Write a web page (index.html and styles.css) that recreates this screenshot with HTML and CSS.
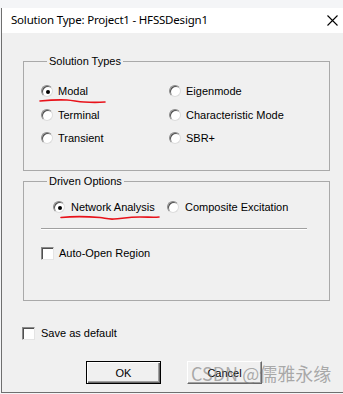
FILE: index.html
```html
<!DOCTYPE html>
<html>
<head>
  <title>Solution Type</title>
  <link rel="stylesheet" href="styles.css">
</head>
<body>
  <div class="window">
    <div class="titlebar">
      <span class="title">Solution Type: Project1 - HFSSDesign1</span>
      <svg class="close" width="11" height="11" viewBox="0 0 11 11">
        <path d="M0.5 0.5 L10.5 10.5 M10.5 0.5 L0.5 10.5" stroke="#000" stroke-width="1.1" fill="none"/>
      </svg>
    </div>

    <div class="dialog">
      <fieldset class="group types">
        <legend>Solution Types</legend>
        <div class="type-grid">
          <label class="opt"><span class="radio checked"></span>Modal</label>
          <label class="opt"><span class="radio"></span>Eigenmode</label>
          <label class="opt"><span class="radio"></span>Terminal</label>
          <label class="opt"><span class="radio"></span>Characteristic Mode</label>
          <label class="opt"><span class="radio"></span>Transient</label>
          <label class="opt"><span class="radio"></span>SBR+</label>
        </div>
      </fieldset>

      <fieldset class="group driven">
        <legend>Driven Options</legend>
        <div class="driven-row">
          <label class="opt wide"><span class="radio checked"></span>Network Analysis</label>
          <label class="opt wide"><span class="radio"></span>Composite Excitation</label>
        </div>
        <div class="separator"></div>
        <label class="opt check-row"><span class="check"></span>Auto-Open Region</label>
      </fieldset>

      <label class="opt save-row"><span class="check"></span>Save as default</label>

      <div class="buttons">
        <button class="btn default">OK</button>
        <button class="btn">Cancel</button>
      </div>

      <div class="watermark">CSDN @儒雅永缘</div>
    </div>
  </div>

  <!-- hand drawn red marks over the screenshot -->
  <svg class="marks" width="343" height="394" viewBox="0 0 343 394">
    <path d="M40 101 C50 100 58 99.5 67 100 C74 100.5 78 102 84 102 C92 102.5 98 102.5 105 102"
          stroke="#e8121a" stroke-width="1.6" fill="none" stroke-linecap="round"/>
    <path d="M61 217.5 C75 216 88 216.5 100 217.5 C105 218 108 219.5 114 219 C122 218.5 128 217 140 217 C148 217 154 217.5 159 217"
          stroke="#e8121a" stroke-width="1.6" fill="none" stroke-linecap="round"/>
  </svg>
</body>
</html>
```

FILE: styles.css
```css
/* dialog look, classic windows controls */
html, body {
  margin: 0;
  height: 394px;
  overflow: hidden;
}

body {
  background-color: #f4f5f7;
  font-family: "Liberation Sans", Arial, sans-serif;
  font-size: 11px;
  color: #000;
}

.window {
  margin: 8px 0 0 1px;
  width: 342px;
  border-left: 1px solid #6f6f6f;
  border-bottom: 1px solid #6f6f6f;
  background-color: #fff;
}

.titlebar {
  height: 25px;
  display: flex;
  align-items: center;
  justify-content: space-between;
  padding: 0 6px 3px 9px;
  box-sizing: border-box;
}

.title {
  font-family: "Noto Sans", sans-serif;
  font-size: 11.5px;
  letter-spacing: -0.2px;
}

.close {
  margin-top: 2px;
}

.dialog {
  position: relative;
  height: 359px;
  background-color: #f0f0f0;
  padding: 22px 0 0 21px;
  box-sizing: border-box;
}

.group {
  width: 307px;
  box-sizing: border-box;
  margin: 0;
  border: 1px solid #a9a9a9;
  padding: 0;
}

.group legend {
  margin-left: 6px;
  padding: 0 2px;
  line-height: 13px;
}

.types {
  padding: 12px 0 21px 17px;
}

.type-grid {
  display: grid;
  grid-template-columns: 128px 150px;
  grid-template-rows: 22px 22px 22px;
  row-gap: 1.5px;
}

.driven {
  margin-top: 4px;
  height: 126px;
  padding: 8px 0 0 17px;
}

.driven-row {
  display: grid;
  grid-template-columns: 114px 150px;
  height: 22px;
  padding-left: 12px;
}

.opt {
  display: flex;
  align-items: center;
  gap: 5px;
  height: 22px;
  white-space: nowrap;
}

.opt.wide {
  gap: 6px;
}

.radio {
  width: 12px;
  height: 12px;
  box-sizing: border-box;
  border-radius: 50%;
  background-color: #fff;
  border: 1px solid;
  border-color: #8a8a8a #dcdcdc #dcdcdc #8a8a8a;
  box-shadow: inset 1px 1px 0 #505050;
  display: flex;
  align-items: center;
  justify-content: center;
}

.radio.checked::after {
  content: "";
  width: 4px;
  height: 4px;
  border-radius: 50%;
  background-color: #000;
  margin: 1px 0 0 1px;
}

.check {
  width: 13px;
  height: 13px;
  box-sizing: border-box;
  background-color: #fff;
  border: 1px solid;
  border-color: #8a8a8a #e4e4e4 #e4e4e4 #8a8a8a;
  box-shadow: inset 1px 1px 0 #505050;
}

.separator {
  width: 266px;
  height: 1px;
  margin: 10px 0 0 0;
  background-color: #a0a0a0;
  border-bottom: 1px solid #fff;
}

.check-row {
  margin-top: 12px;
}

.save-row {
  margin: 21px 0 0 -1px;
  gap: 6px;
}

.buttons {
  display: flex;
  gap: 26px;
  margin: 17px 0 0 63px;
}

.btn {
  width: 75px;
  height: 23px;
  padding: 0;
  background-color: #f0f0f0;
  font-family: "Liberation Sans", Arial, sans-serif;
  font-size: 11px;
  color: #000;
  border: 1px solid;
  border-color: #fff #696969 #696969 #fff;
  box-shadow: inset -1px -1px 0 #a0a0a0;
}

.btn.default {
  border: 1px solid #000;
  box-shadow: inset 1px 1px 0 #fff, inset -1px -1px 0 #696969, inset -2px -2px 0 #a0a0a0;
}

.watermark {
  position: absolute;
  left: 189px;
  top: 327px;
  font-family: "Noto Sans CJK SC", "Noto Sans", sans-serif;
  font-size: 18px;
  color: rgba(120, 120, 120, 0.6);
  white-space: nowrap;
}

.marks {
  position: absolute;
  top: 0;
  left: 0;
  pointer-events: none;
}
```
